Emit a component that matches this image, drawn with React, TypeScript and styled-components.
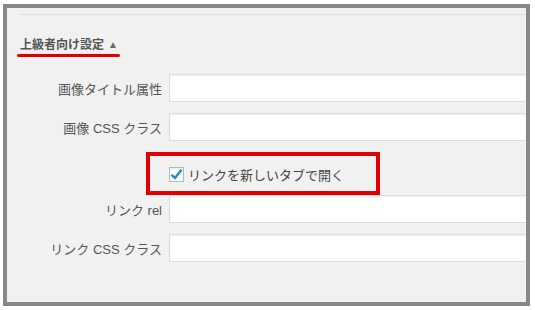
import React from "react";
import styled, { createGlobalStyle } from "styled-components";

const GlobalStyle = createGlobalStyle`
  html, body {
    margin: 0;
    padding: 0;
    background: #ffffff;
  }
  body {
    font-family: "Liberation Sans", "Noto Sans CJK JP", sans-serif;
    color: #555;
  }
`;

const Frame = styled.div`
  box-sizing: border-box;
  width: 527px;
  height: 302px;
  margin: 4px 0 0 3px;
  border: 4px solid #888;
  background: #f1f1f1;
  display: flex;
  flex-direction: column;
  padding-top: 6px;
  overflow: hidden;
`;

const Rule = styled.div`
  height: 1px;
  margin-left: 13px;
  background: #dedede;
`;

const Heading = styled.div`
  margin: 22px 0 0 13px;
  height: 16px;
  line-height: 16px;
  font-size: 12px;
  font-weight: bold;
  color: #555;
  display: flex;
  align-items: center;
`;

const Arrow = styled.span`
  font-size: 10px;
  margin-left: 4px;
  color: #666;
`;

const Underline = styled.div`
  width: 103px;
  height: 3px;
  margin: 1px 0 0 10px;
  border-radius: 2px;
  background: #e00000;
`;

const Row = styled.div<{ $top: number }>`
  display: flex;
  align-items: center;
  gap: 7px;
  height: 28px;
  margin-top: ${(p) => p.$top}px;
`;

const Label = styled.label`
  width: 155px;
  flex-shrink: 0;
  text-align: right;
  font-size: 13px;
  color: #555;
  white-space: nowrap;
`;

const Field = styled.div`
  flex: 1;
  align-self: stretch;
  box-sizing: border-box;
  background: #fff;
  border: 1px solid #ddd;
  border-right: none;
  box-shadow: inset 0 1px 2px rgba(0, 0, 0, 0.07);
`;

const CheckRow = styled.div`
  margin-top: 11px;
  height: 43px;
  display: flex;
`;

const Highlight = styled.div`
  box-sizing: border-box;
  width: 234px;
  height: 43px;
  margin-left: 139px;
  border: 4px solid #e00000;
  display: flex;
  align-items: center;
  padding-left: 19px;
  padding-top: 2px;
  gap: 4px;
`;

const Box = styled.span`
  box-sizing: border-box;
  width: 15px;
  height: 15px;
  background: #fff;
  border: 1px solid #b4b9be;
  box-shadow: inset 0 1px 2px rgba(0, 0, 0, 0.1);
  display: flex;
  align-items: center;
  justify-content: center;
  overflow: visible;
`;

const CheckText = styled.span`
  font-size: 13px;
  color: #444;
  white-space: nowrap;
`;

const fields = ["画像タイトル属性", "画像 CSS クラス"];
const linkFields = ["リンク rel", "リンク CSS クラス"];

export default function App() {
  return (
    <>
      <GlobalStyle />
      <Frame>
        <Rule />
        <Heading>
          上級者向け設定<Arrow>▲</Arrow>
        </Heading>
        <Underline />
        {fields.map((f, i) => (
          <Row key={f} $top={i === 0 ? 17 : 11}>
            <Label>{f}</Label>
            <Field />
          </Row>
        ))}
        <CheckRow>
          <Highlight>
            <Box>
              <svg width="13" height="13" viewBox="0 0 13 13" style={{ overflow: "visible" }}>
                <path
                  d="M1.5 6.8 L5 10 L11.5 1.8"
                  fill="none"
                  stroke="#1e8cbe"
                  strokeWidth="2.4"
                />
              </svg>
            </Box>
            <CheckText>リンクを新しいタブで開く</CheckText>
          </Highlight>
        </CheckRow>
        {linkFields.map((f, i) => (
          <Row key={f} $top={i === 0 ? 0 : 11}>
            <Label>{f}</Label>
            <Field />
          </Row>
        ))}
      </Frame>
    </>
  );
}
